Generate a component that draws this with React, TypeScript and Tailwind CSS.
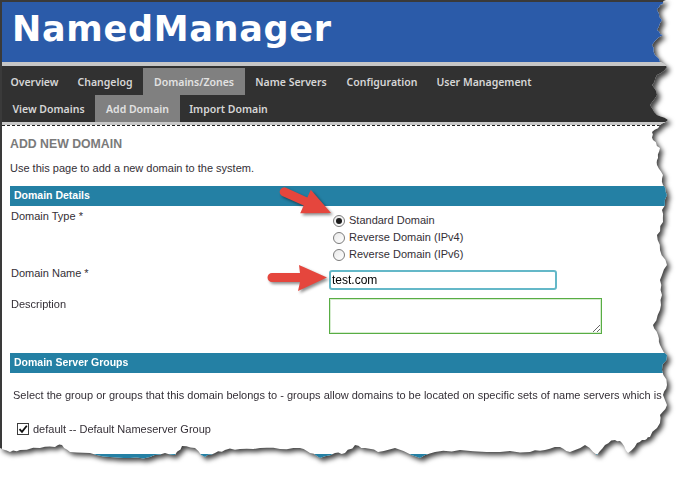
import React from "react";

type Pt = [number, number];

// torn paper outline, traced from the screenshot
const rightEdge: Pt[] = [
  [666, 0], [660, 5], [657, 10], [662, 20], [657, 30], [663, 35], [652, 45], [655, 55],
  [660, 62], [667, 67], [657, 75], [652, 85], [657, 95], [650, 105], [657, 115], [668, 120],
  [660, 125], [652, 132], [653, 140], [660, 148], [658, 158], [657, 165], [663, 175],
  [663, 185], [667, 195], [662, 210], [663, 222], [657, 235], [660, 250], [667, 265],
  [660, 280], [662, 295], [660, 310], [653, 325], [658, 335], [660, 345], [667, 355],
  [662, 370], [667, 385], [663, 395], [667, 405], [660, 415], [660, 423], [650, 437],
  [645, 440], [637, 443],
];

const bottomEdge: Pt[] = [
  [628, 453], [622, 443], [615, 440], [605, 445], [597, 455], [585, 445], [570, 452],
  [560, 447], [545, 450], [530, 452], [500, 452], [460, 450], [435, 452], [420, 458],
  [395, 448], [378, 452], [365, 448], [355, 445], [345, 453], [335, 453], [320, 458],
  [310, 453], [300, 448], [280, 449], [260, 448], [240, 449], [225, 450], [215, 453],
  [205, 457], [195, 448], [182, 446], [175, 455], [165, 453], [150, 457], [130, 458],
  [110, 457], [90, 453], [70, 452], [62, 445], [55, 447], [40, 448], [20, 450], [10, 452],
  [0, 448],
];

function jagged(points: Pt[]): Pt[] {
  const out: Pt[] = [];
  for (let i = 0; i < points.length - 1; i++) {
    const [x1, y1] = points[i];
    const [x2, y2] = points[i + 1];
    out.push([x1, y1]);
    const dx = x2 - x1;
    const dy = y2 - y1;
    const len = Math.hypot(dx, dy) || 1;
    for (let s = 1; s < 3; s++) {
      const t = s / 3;
      const n = Math.sin((i * 7 + s) * 12.9898) * 43758.5453;
      const r = (n - Math.floor(n) - 0.5) * 2.4;
      out.push([x1 + dx * t + (-dy / len) * r, y1 + dy * t + (dx / len) * r]);
    }
  }
  out.push(points[points.length - 1]);
  return out;
}

const tornClip =
  "polygon(" +
  [[0, 0] as Pt, ...jagged([...rightEdge, ...bottomEdge])]
    .map(([x, y]) => `${x.toFixed(1)}px ${y.toFixed(1)}px`)
    .join(", ") +
  ")";

const topMenu = [
  { label: "Overview", w: "w-[65px]" },
  { label: "Changelog", w: "w-[76px]" },
  { label: "Domains/Zones", w: "w-[102px]", active: true },
  { label: "Name Servers", w: "w-[92px]" },
  { label: "Configuration", w: "w-[90px]" },
  { label: "User Management", w: "w-[114px]" },
];

const subMenu = [
  { label: "View Domains", w: "w-[93px]" },
  { label: "Add Domain", w: "w-[85px]", active: true },
  { label: "Import Domain", w: "w-[97px]" },
];

function NavRow({ items }: { items: { label: string; w: string; active?: boolean }[] }) {
  return (
    <div className="flex h-[27px]">
      {items.map((item) => (
        <div
          key={item.label}
          className={`${item.w} flex items-center justify-center pt-[2px] whitespace-nowrap ${
            item.active ? "bg-[#808080] text-[#e2e2e2]" : "text-[#d6d6d6]"
          }`}
        >
          {item.label}
        </div>
      ))}
    </div>
  );
}

function SectionBar({ title }: { title: string }) {
  return (
    <div className="h-[20px] bg-[#2480a4] pl-1 flex items-center text-[10.5px] font-bold text-white whitespace-nowrap">
      {title}
    </div>
  );
}

function Radio({ label, checked }: { label: string; checked?: boolean }) {
  return (
    <div className="h-[17px] flex items-center">
      <span className="ml-[4px] w-[12px] h-[12px] rounded-full border border-[#7b7b7b] bg-gradient-to-br from-[#e9e9e9] to-white flex items-center justify-center">
        {checked && <span className="w-[6px] h-[6px] rounded-full bg-[#1b1b1b]" />}
      </span>
      <span className="ml-[4px]">{label}</span>
    </div>
  );
}

function Arrows() {
  return (
    <svg
      className="absolute left-0 top-0 pointer-events-none [filter:drop-shadow(2px_2px_1.5px_rgba(0,0,0,0.45))]"
      width="690"
      height="482"
      viewBox="0 0 690 482"
    >
      <path
        d="M285.95 187.7 L307.35 197.4 L310.8 189.7 L331 213 L300.2 213.3 L303.65 205.6 L282.25 195.9 A4.5 4.5 0 0 1 285.95 187.7 Z"
        fill="#e5463d"
      />
      <path
        d="M272 273 L300 273 L299 265 L327 277.5 L298 291 L300 282 L272 282 A4.5 4.5 0 0 1 272 273 Z"
        fill="#e5463d"
      />
    </svg>
  );
}

export default function App() {
  return (
    <div className="relative w-[690px] h-[482px] bg-white overflow-hidden">
      <div className="[filter:drop-shadow(3px_3px_2.5px_rgba(0,0,0,0.75))]">
        <div
          style={{ clipPath: tornClip }}
          className="w-[690px] h-[482px] bg-white border-l-2 border-t-2 border-[#3a3a3a] flex flex-col font-['Liberation_Sans',Arial,sans-serif] text-[11px] text-[#342f36]"
        >
          <header className="h-[60px] bg-[#2b5ba9] pl-[10px] pt-[7px]">
            <h1 className="font-['DejaVu_Sans',Verdana,sans-serif] font-bold text-[35px] leading-[40px] tracking-[0.7px] text-white">
              NamedManager
            </h1>
          </header>
          <div className="h-[4px] bg-[#c6c6c6]" />
          <nav className="bg-[#313131] pt-[2px] font-['Noto_Sans',Tahoma,sans-serif] font-semibold text-[10.5px]">
            <NavRow items={topMenu} />
            <NavRow items={subMenu} />
          </nav>
          <div className="h-[3px] bg-[#c8c8c8]" />
          <div className="border-t border-dashed border-[#222] px-2 flex-1">
            <h2 className="mt-[11px] text-[12.3px] leading-[14px] font-bold text-[#7a7a7a]">ADD NEW DOMAIN</h2>
            <p className="mt-[10px] leading-[14px]">Use this page to add a new domain to the system.</p>

            <div className="mt-[11px]">
              <SectionBar title="Domain Details" />
            </div>

            <div className="flex">
              <div className="w-[319px] pl-[1px] mt-[3px] leading-[14px]">Domain Type *</div>
              <div className="mt-[6px]">
                <Radio label="Standard Domain" checked />
                <Radio label="Reverse Domain (IPv4)" />
                <Radio label="Reverse Domain (IPv6)" />
              </div>
            </div>

            <div className="flex">
              <div className="w-[319px] pl-[1px] mt-[3px] leading-[14px]">Domain Name *</div>
              <input
                readOnly
                value="test.com"
                className="mt-[7px] w-[228px] h-[20px] border-2 border-[#64b8c8] rounded-[3px] px-[1px] text-[12px] text-black outline-none"
              />
            </div>

            <div className="flex">
              <div className="w-[319px] pl-[1px] mt-[7px] leading-[14px]">Description</div>
              <textarea
                readOnly
                className="mt-[8px] w-[273px] h-[36px] border border-[#58ad44] shadow-[inset_0_0_0_1px_#d6ecd0] outline-none"
              />
            </div>

            <div className="mt-[19px]">
              <SectionBar title="Domain Server Groups" />
            </div>

            <p className="mt-[15px] pl-[3px] leading-[14px] whitespace-nowrap">
              Select the group or groups that this domain belongs to - groups allow domains to be located on specific sets of name servers which is
            </p>

            <div className="mt-[19px] h-[16px] flex items-center">
              <span className="ml-[7px] w-[12px] h-[12px] border border-[#3d3d3d] bg-white flex items-center justify-center">
                <svg width="10" height="10" viewBox="0 0 10 10">
                  <path d="M1.5 5.2 L4 7.8 L8.8 1.8" fill="none" stroke="#111" strokeWidth="1.8" />
                </svg>
              </span>
              <span className="ml-[4px]">default -- Default Nameserver Group</span>
            </div>

            <div className="mt-[17px]">
              <SectionBar title="" />
            </div>
          </div>
        </div>
      </div>
      <Arrows />
    </div>
  );
}
